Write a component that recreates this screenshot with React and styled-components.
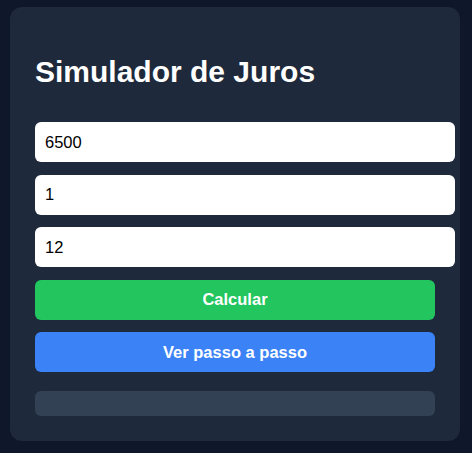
import React, {useState} from 'react'
import styled, {createGlobalStyle} from 'styled-components'

const GlobalStyle = createGlobalStyle`
  html, body {
    margin: 0;
    padding: 0;
    background-color: #0f172a;
    font-family: "Liberation Sans", Arial, sans-serif;
  }
`

const Card = styled.section`
  width: 450px;
  box-sizing: border-box;
  margin: 7px 10px;
  padding: 25px;
  background-color: #1e293b;
  border-radius: 12px;

  h1 {
    margin: 23px 0 33px;
    font-size: 30px;
    line-height: 34px;
    font-weight: bold;
    color: #fff;
  }
`

const Form = styled.div`
  display: flex;
  flex-direction: column;
  gap: 12.5px;
`

const Field = styled.input`
  box-sizing: content-box;
  width: 100%;
  height: 40px;
  padding: 0 10px;
  border: none;
  border-radius: 6px;
  background-color: #fff;
  color: #000;
  font-family: inherit;
  font-size: 16.5px;
  outline: none;
`

const Button = styled.button`
  height: 40px;
  border: none;
  border-radius: 6px;
  background-color: ${props => props.color};
  color: #fff;
  font-family: inherit;
  font-size: 16.5px;
  font-weight: bold;
  cursor: pointer;
`

const Result = styled.div`
  height: 25px;
  margin-top: 19px;
  border-radius: 6px;
  background-color: #334155;
`

export default function App () {
  const [capital, setCapital] = useState('6500')
  const [taxa, setTaxa] = useState('1')
  const [meses, setMeses] = useState('12')

  return (
    <>
      <GlobalStyle />
      <Card>
        <h1>Simulador de Juros</h1>
        <Form>
          <Field value={capital} onChange={e => setCapital(e.target.value)} />
          <Field value={taxa} onChange={e => setTaxa(e.target.value)} />
          <Field value={meses} onChange={e => setMeses(e.target.value)} />
          <Button color={'#22c55e'}>Calcular</Button>
          <Button color={'#3b82f6'}>Ver passo a passo</Button>
        </Form>
        <Result />
      </Card>
    </>
  )
}
